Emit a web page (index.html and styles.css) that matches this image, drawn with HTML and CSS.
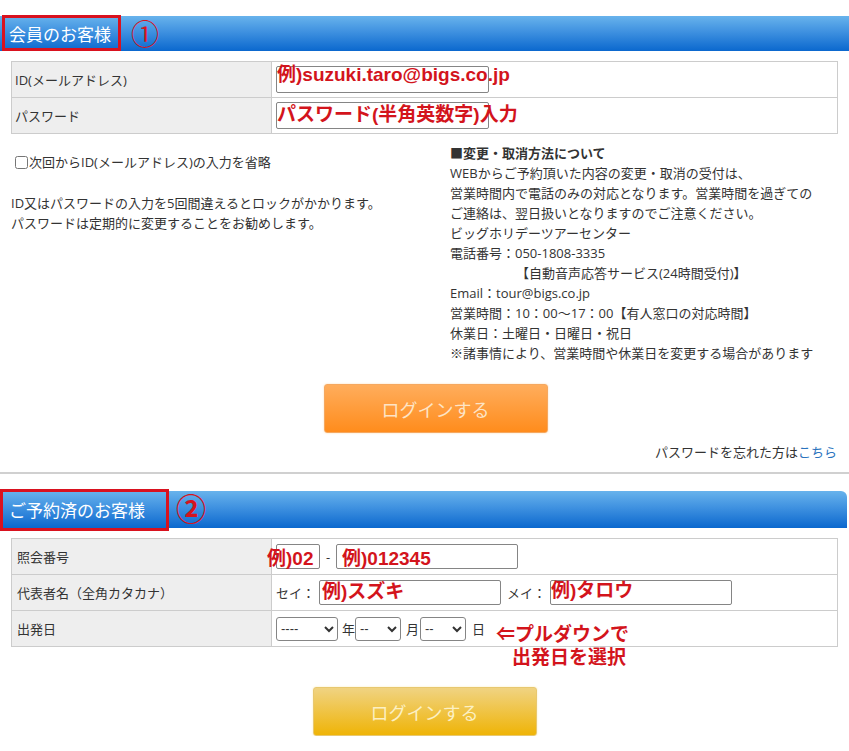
FILE: index.html
```html
<!DOCTYPE html>
<html lang="ja">
<head>
<meta charset="utf-8">
<title>ログイン</title>
<link rel="stylesheet" href="styles.css">
</head>
<body>
<div class="page">

<!-- member login -->
<div class="bar bar1">
	<span class="bar-title">会員のお客様</span>
	<span class="mark mark1"></span>
	<span class="num num1">①</span>
</div>

<div class="form-table">
	<div class="lbl">ID(メールアドレス)</div>
	<div class="val">
		<input type="text" class="txt txt-lg">
		<span class="note n-id">例)suzuki.taro@bigs.co.jp</span>
	</div>
	<div class="lbl">パスワード</div>
	<div class="val">
		<input type="password" class="txt txt-lg">
		<span class="note n-pw">パスワード(半角英数字)入力</span>
	</div>
</div>

<div class="info">
	<div class="info-left">
		<label class="remember"><input type="checkbox" class="chk">次回からID(メールアドレス)の入力を省略</label>
		<p class="lock">ID又はパスワードの入力を5回間違えるとロックがかかります。<br>パスワードは定期的に変更することをお勧めします。</p>
	</div>
	<div class="info-right">
		<p class="ttl">■変更・取消方法について</p>
		<p>WEBからご予約頂いた内容の変更・取消の受付は、</p>
		<p>営業時間内で電話のみの対応となります。営業時間を過ぎての</p>
		<p>ご連絡は、翌日扱いとなりますのでご注意ください。</p>
		<p>ビッグホリデーツアーセンター</p>
		<p>電話番号：050-1808-3335</p>
		<p class="indent">【自動音声応答サービス(24時間受付)】</p>
		<p>Email：tour@bigs.co.jp</p>
		<p>営業時間：10：00～17：00【有人窓口の対応時間】</p>
		<p>休業日：土曜日・日曜日・祝日</p>
		<p>※諸事情により、営業時間や休業日を変更する場合があります</p>
	</div>
</div>

<div class="btn-row btn-row1">
	<button type="button" class="btn btn-orange">ログインする</button>
</div>

<div class="forgot">パスワードを忘れた方は<a href="#">こちら</a></div>

<hr class="sep">

<!-- booked customers -->
<div class="bar bar2">
	<span class="bar-title">ご予約済のお客様</span>
	<span class="mark mark2"></span>
	<span class="num num2">②</span>
</div>

<div class="form-table form-table2">
	<div class="lbl">照会番号</div>
	<div class="val">
		<input type="text" class="txt txt-xs">
		<span class="dash">-</span>
		<input type="text" class="txt txt-md">
		<span class="note n-no1">例)02</span>
		<span class="note n-no2">例)012345</span>
	</div>
	<div class="lbl">代表者名（全角カタカナ）</div>
	<div class="val">
		<span>セイ：</span>
		<input type="text" class="txt txt-md sp-l4">
		<span class="sp-l6">メイ：</span>
		<input type="text" class="txt txt-md sp-l4">
		<span class="note n-sei">例)スズキ</span>
		<span class="note n-mei">例)タロウ</span>
	</div>
	<div class="lbl">出発日</div>
	<div class="val">
		<select class="sel sel-y"><option>----</option></select>
		<span class="sp-l4">年</span>
		<select class="sel sel-d"><option>--</option></select>
		<span class="sp-l5">月</span>
		<select class="sel sel-d sp-l1"><option>--</option></select>
		<span class="sp-l6">日</span>
		<span class="note n-pull"><span class="pl1">⇐プルダウンで</span><span class="pl2">出発日を選択</span></span>
	</div>
</div>

<div class="btn-row btn-row2">
	<button type="button" class="btn btn-yellow">ログインする</button>
</div>

</div>
</body>
</html>
```

FILE: styles.css
```css
*
{
	box-sizing:border-box;
}
html, body
{
	margin:0;
	padding:0;
	background-color:#fff;
}
body
{
	font-family:"Open Sans", "Noto Sans CJK JP", sans-serif;
	font-size:13px;
	line-height:20px;
	color:#333;
}
.page
{
	width:849px;
}

/* blue section bars */
.bar
{
	position:relative;
	height:35px;
	margin-top:16px;
	padding-left:9px;
	background:linear-gradient(#68b3ec, #3f91e0 45%, #0b68ce);
	color:#fff;
	font-family:"Noto Sans CJK JP", sans-serif;
	font-size:17px;
	line-height:35px;
}
.bar2
{
	height:37px;
	line-height:37px;
	margin-top:17px;
	width:847px;
	border-radius:0 6px 0 0;
}
.mark
{
	position:absolute;
	border:3px solid #d9121f;
}
.mark1 { left:2px; top:-1px; width:119px; height:36px; }
.mark2 { left:0; top:-2px; width:169px; height:42px; }
.num
{
	position:absolute;
	color:#d4141e;
	font-family:"Noto Sans CJK JP", sans-serif;
	line-height:30px;
	font-size:28px;
}
.num1 { left:131px; top:2px; }
.num2 { left:176px; top:1px; font-weight:bold; font-size:30px; }

/* form tables */
.form-table
{
	display:grid;
	grid-template-columns:260px 1fr;
	width:827px;
	margin:10px 0 0 11px;
	border:1px solid #ccc;
	border-bottom:0;
}
.lbl, .val
{
	height:36px;
	border-bottom:1px solid #ccc;
	display:flex;
	align-items:center;
}
.lbl
{
	background-color:#eee;
	border-right:1px solid #ccc;
	padding-left:3px;
}
.form-table2 .lbl { padding-left:5px; }
.val
{
	position:relative;
	padding-left:4px;
}
.txt
{
	height:25px;
	border:1px solid #858585;
	border-radius:2px;
	padding:0 3px;
	font-size:13px;
	background:#fff;
}
.txt-lg { width:213px; height:27px; }
.txt-xs { width:44px; }
.txt-md { width:182px; }
.dash { width:4px; margin:0 6px; }
.sel
{
	height:24px;
	border:1px solid #858585;
	border-radius:3px;
	font-size:13px;
	font-family:"Liberation Sans", sans-serif;
	background:#fff;
	color:#333;
}
.sel-y { width:62px; }
.sel-d { width:46px; }
.sp-l1 { margin-left:1px; }
.sp-l4 { margin-left:4px; }
.sp-l5 { margin-left:5px; }
.sp-l6 { margin-left:6px; }

/* red annotation text over the form */
.note
{
	position:absolute;
	font-family:"Liberation Sans", "Noto Sans CJK JP", "DejaVu Sans", sans-serif;
	font-weight:bold;
	font-size:19px;
	line-height:19px;
	color:#d3141c;
	white-space:nowrap;
}
.n-id { left:5px; top:3px; }
.n-pw { left:5px; top:7px; }
.n-no1 { left:-5px; top:10px; }
.n-no2 { left:70px; top:10px; }
.n-sei { left:50px; top:7px; }
.n-mei { left:279px; top:6px; }
.n-pull { left:224px; top:14px; }
.n-pull .pl1, .n-pull .pl2 { display:block; }
.n-pull .pl2 { padding-left:16px; margin-top:4px; }

/* info block */
.info
{
	display:grid;
	grid-template-columns:439px 1fr;
	margin:9px 0 0 11px;
}
.info p
{
	margin:0;
}
.remember
{
	display:flex;
	align-items:center;
	margin-top:9px;
}
.chk
{
	width:13px;
	height:13px;
	margin:0 1px 0 4px;
}
.lock
{
	margin-top:21px !important;
}
.info-right .ttl
{
	font-weight:bold;
}
.indent
{
	padding-left:66px;
}

/* buttons */
.btn-row
{
	display:flex;
	justify-content:center;
}
.btn-row1
{
	margin-top:21px;
	padding-left:22px;
}
.btn-row2
{
	margin-top:40px;
}
.btn
{
	width:224px;
	height:49px;
	border-radius:3px;
	font-family:"Noto Sans CJK JP", sans-serif;
	font-size:18px;
	cursor:pointer;
}
.btn-orange
{
	background:linear-gradient(#ffad5c, #ff8c1c);
	border:1px solid #f5a860;
	color:#fde4c6;
	box-shadow:0 0 2px rgba(255,190,110,.6);
}
.btn-yellow
{
	background:linear-gradient(#f0d382, #efb407);
	border:1px solid #e8c870;
	color:#fcf0c4;
	box-shadow:0 0 2px rgba(250,220,120,.6);
}
.forgot
{
	margin-top:9px;
	padding-right:12px;
	text-align:right;
}
.forgot a
{
	color:#2a73bd;
	text-decoration:none;
}
.sep
{
	height:0;
	margin:10px 0 0 0;
	border:0;
	border-top:2px solid #d0d0d0;
}
```
